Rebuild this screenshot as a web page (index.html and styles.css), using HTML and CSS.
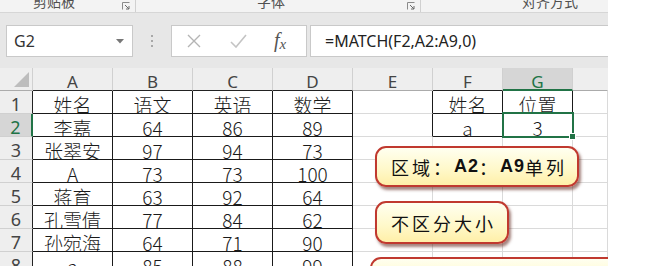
FILE: index.html
```html
<!DOCTYPE html>
<html lang="zh-CN">
<head>
<meta charset="utf-8">
<link rel="stylesheet" href="styles.css">
</head>
<body>
<div class="app">
  <div class="ribbon">
    <div class="group g1"><span class="glabel">剪贴板</span><svg class="launcher" width="8" height="8" viewBox="0 0 8 8"><path d="M0.5 7.5V0.5H7.5" fill="none" stroke="#8a8a8a"/><path d="M3 3L7 7M7 4V7H4" fill="none" stroke="#6a6a6a"/></svg></div>
    <div class="group g2"><span class="glabel">字体</span><svg class="launcher" width="8" height="8" viewBox="0 0 8 8"><path d="M0.5 7.5V0.5H7.5" fill="none" stroke="#8a8a8a"/><path d="M3 3L7 7M7 4V7H4" fill="none" stroke="#6a6a6a"/></svg></div>
    <div class="group g3"><span class="glabel">对齐方式</span></div>
  </div>
  <div class="fbar">
    <div class="namebox"><span>G2</span><svg width="8" height="5" viewBox="0 0 8 5"><path d="M0 0H8L4 4.5Z" fill="#777"/></svg></div>
    <div class="dots"><i></i><i></i><i></i></div>
    <div class="fxbox">
      <svg class="ico" width="14" height="14" viewBox="0 0 14 14"><path d="M1 1L13 13M13 1L1 13" stroke="#b4b4b4" stroke-width="1.4" fill="none"/></svg>
      <svg class="ico chk" width="17" height="14" viewBox="0 0 17 14"><path d="M1 8L6 13L16 1" stroke="#c4c4c4" stroke-width="1.6" fill="none"/></svg>
      <span class="fx">f<sub>x</sub></span>
    </div>
    <div class="formula">=MATCH(F2,A2:A9,0)</div>
  </div>
  <div class="sheet">
    <div class="corner"><i class="tri"></i></div>
    <div class="ch k">A</div><div class="ch k">B</div><div class="ch k">C</div><div class="ch k">D</div><div class="ch">E</div><div class="ch k">F</div><div class="ch sel">G</div><div class="ch last"></div>

    <div class="rh">1</div><div class="c b">姓名</div><div class="c b">语文</div><div class="c b">英语</div><div class="c b">数学</div><div class="c rk"></div><div class="c b">姓名</div><div class="c b">位置</div><div class="c"></div>

    <div class="rh rsel">2</div><div class="c b">李嘉</div><div class="c b">64</div><div class="c b">86</div><div class="c b">89</div><div class="c rk"></div><div class="c b">a</div><div class="c b">3</div><div class="c"></div>

    <div class="rh">3</div><div class="c b">张翠安</div><div class="c b">97</div><div class="c b">94</div><div class="c b">73</div><div class="c"></div><div class="c"></div><div class="c"></div><div class="c"></div>

    <div class="rh">4</div><div class="c b">A</div><div class="c b">73</div><div class="c b">73</div><div class="c b">100</div><div class="c"></div><div class="c"></div><div class="c"></div><div class="c"></div>

    <div class="rh">5</div><div class="c b">蒋育</div><div class="c b">63</div><div class="c b">92</div><div class="c b">64</div><div class="c"></div><div class="c"></div><div class="c"></div><div class="c"></div>

    <div class="rh">6</div><div class="c b">孔雪倩</div><div class="c b">77</div><div class="c b">84</div><div class="c b">62</div><div class="c"></div><div class="c"></div><div class="c"></div><div class="c"></div>

    <div class="rh">7</div><div class="c b">孙宛海</div><div class="c b">64</div><div class="c b">71</div><div class="c b">90</div><div class="c"></div><div class="c"></div><div class="c"></div><div class="c"></div>

    <div class="rh">8</div><div class="c b">a</div><div class="c b">85</div><div class="c b">88</div><div class="c b">99</div><div class="c"></div><div class="c"></div><div class="c"></div><div class="c"></div>
  </div>

  <div class="selbox"><i class="handle"></i></div>
  <div class="callout co1">区域：<b>A2</b>：<b>A9</b>单列</div>
  <div class="callout co2">不区分大小</div>
  <div class="callout co3"></div>
</div>
</body>
</html>
```

FILE: styles.css
```css
html, body {
  margin: 0;
  padding: 0;
  background: #ffffff;
  overflow: hidden;
}
body {
  width: 645px;
  height: 266px;
  font-family: "Noto Sans", "Noto Sans CJK SC", sans-serif;
}
.app {
  position: relative;
  width: 608px;
  height: 266px;
  overflow: hidden;
}

/* ribbon */
.ribbon {
  display: flex;
  height: 12px;
  background: #f3f3f3;
  border-bottom: 1px solid #d6d6d6;
  overflow: hidden;
}
.group {
  position: relative;
  display: flex;
  align-items: flex-start;
  border-right: 1px solid #d0d0d0;
  height: 12px;
  box-sizing: border-box;
}
.g1 { width: 136px; }
.g2 { width: 285px; }
.g3 { width: 187px; border-right: none; }
.glabel {
  font-family: "Noto Sans CJK SC", sans-serif;
  font-size: 14px;
  line-height: 14px;
  margin-top: -6px;
  color: #505050;
  white-space: nowrap;
}
.g1 .glabel { margin-left: 33px; }
.g2 .glabel { margin-left: 121px; }
.g3 .glabel { margin-left: 101px; }
.launcher { position: absolute; top: 2px; right: 5px; }

/* formula bar */
.fbar {
  display: flex;
  align-items: flex-start;
  height: 55px;
  box-sizing: border-box;
  padding: 12px 0 0 6px;
  background: #e7e7e7;
}
.namebox {
  width: 127px;
  height: 32px;
  box-sizing: border-box;
  background: #fff;
  border: 1px solid #c9c9c9;
  display: flex;
  align-items: center;
  justify-content: space-between;
  padding: 0 8px 0 7px;
  font-size: 16px;
  color: #333;
}
.namebox svg { margin-top: 1px; }
.dots {
  width: 38px;
  height: 32px;
  display: flex;
  flex-direction: column;
  align-items: center;
  justify-content: center;
  gap: 3px;
}
.dots i {
  display: block;
  width: 2px;
  height: 2px;
  background: #a8a8a8;
}
.fxbox {
  width: 136px;
  height: 32px;
  box-sizing: border-box;
  background: #fff;
  border: 1px solid #c9c9c9;
  display: flex;
  align-items: center;
  padding-left: 15px;
}
.fxbox .ico { flex: none; }
.fxbox .chk { margin-left: 29px; }
.fx {
  margin-left: 27px;
  font-family: "Liberation Serif", serif;
  font-style: italic;
  font-size: 20px;
  color: #555;
  line-height: 1;
}
.fx sub { font-size: 15px; vertical-align: -2px; }
.formula {
  flex: 1;
  height: 32px;
  margin-left: 3px;
  box-sizing: border-box;
  background: #fff;
  border: 1px solid #c9c9c9;
  border-right: none;
  display: flex;
  align-items: center;
  padding-left: 14px;
  font-size: 16px;
  color: #222;
}

/* sheet */
.sheet {
  display: grid;
  grid-template-columns: 33px repeat(5, 80px) 70px 70px 35px;
  grid-template-rows: repeat(9, 23px);
  font-family: "Noto Sans CJK SC", sans-serif;
}
.sheet > div {
  box-sizing: border-box;
  display: flex;
  align-items: center;
  justify-content: center;
  border-right: 1px solid #dadada;
  border-bottom: 1px solid #dadada;
  padding-top: 4px;
  line-height: 1;
  white-space: nowrap;
}
.corner {
  position: relative;
  background: #eeeeee;
  border-right-color: #d0d0d0 !important;
  border-bottom-color: #ababab !important;
}
.tri {
  position: absolute;
  right: 3px;
  bottom: 3px;
  width: 0;
  height: 0;
  border-left: 15px solid transparent;
  border-bottom: 15px solid #bdbdbd;
}
.ch {
  background: #eeeeee;
  color: #444;
  font-size: 17px;
  font-family: "Noto Sans", sans-serif;
  border-right-color: #d0d0d0 !important;
  border-bottom-color: #ababab !important;
}
.ch.k { border-bottom-color: #222 !important; }
.ch.sel {
  background: #d6d6d6;
  color: #217346;
  border-bottom: 2px solid #217346 !important;
  padding-top: 5px !important;
}
.ch.last { border-right-color: #eeeeee !important; }
.rh {
  background: #eeeeee;
  color: #444;
  font-size: 18px;
  font-family: "Noto Sans", sans-serif;
  border-right-color: #222 !important;
  border-bottom-color: #d0d0d0 !important;
}
.rh.rsel {
  background: #d6d6d6;
  color: #217346;
  border-right: 2px solid #217346 !important;
}
.c {
  font-size: 19px;
  font-weight: 300;
  color: #1a1a1a;
  background: #fff;
}
.c.b {
  border-right-color: #1a1a1a;
  border-bottom-color: #1a1a1a;
}
.c.rk { border-right-color: #1a1a1a; }

/* selection */
.selbox {
  position: absolute;
  left: 502px;
  top: 112px;
  width: 72px;
  height: 26px;
  box-sizing: border-box;
  border: 2px solid #217346;
}
.handle {
  position: absolute;
  right: -4px;
  bottom: -4px;
  width: 5px;
  height: 5px;
  background: #217346;
  border: 1px solid #fff;
}

/* callouts */
.callout {
  position: absolute;
  box-sizing: border-box;
  border: 2px solid #c0392f;
  border-radius: 11px;
  background: linear-gradient(to bottom, #fffff0 0%, #fff8c8 60%, #ffefa8 100%);
  box-shadow: 2px 3px 3px rgba(90, 30, 20, 0.55);
  font-family: "Noto Sans CJK SC", sans-serif;
  font-size: 18px;
  color: #111;
  letter-spacing: 3px;
  display: flex;
  align-items: center;
  padding-left: 14px;
  white-space: nowrap;
}
.callout b {
  font-family: "Liberation Sans", sans-serif;
  font-weight: bold;
  letter-spacing: 1px;
}
.co1 { left: 375px; top: 146px; width: 204px; height: 41px; }
.co2 { left: 375px; top: 201px; width: 134px; height: 43px; }
.co3 { left: 370px; top: 257px; width: 262px; height: 40px; }
```
